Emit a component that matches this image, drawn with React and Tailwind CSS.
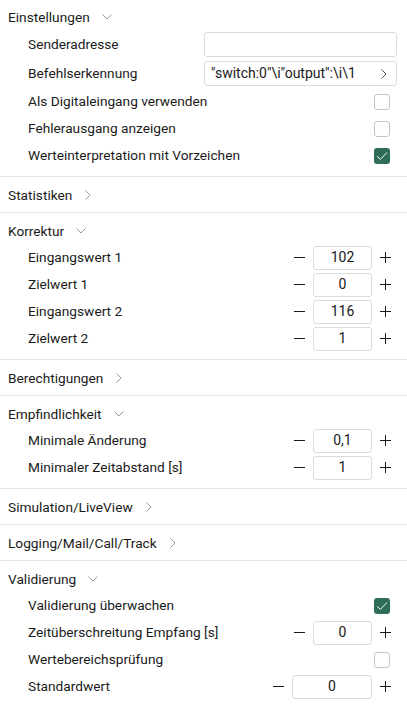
import React from "react";

const ChevronDown = () => (
  <svg width="10" height="6" viewBox="0 0 10 6" className="ml-[12px]" fill="none">
    <path d="M0.5 0.5 L5 5 L9.5 0.5" stroke="#9a9a9a" strokeWidth="1" />
  </svg>
);
const ChevronRight = ({ color = "#9a9a9a" }) => (
  <svg width="6" height="10" viewBox="0 0 6 10" fill="none">
    <path d="M0.5 0.5 L5 5 L0.5 9.5" stroke={color} strokeWidth="1" />
  </svg>
);

const Checkbox = ({ checked }) =>
  checked ? (
    <div className="mr-[7px] flex h-[16px] w-[16px] items-center justify-center rounded-[3px] bg-[#2f6e56]">
      <svg width="12" height="10" viewBox="0 0 12 10" fill="none">
        <path d="M1 5.2 L4.3 8.4 L11 1.5" stroke="#ffffff" strokeWidth="1" />
      </svg>
    </div>
  ) : (
    <div className="mr-[7px] h-[16px] w-[16px] rounded-[3px] border border-[#c6c6c6] bg-white" />
  );

const Stepper = ({ value, wide }) => (
  <div className="mr-[6px] flex items-center">
    <div className="h-[1px] w-[11px] bg-[#1a1a1a]" />
    <div
      className={
        (wide ? "w-[80px]" : "w-[59px]") +
        " ml-[8px] mr-[8px] flex h-[24px] items-center justify-center rounded-[3px] border border-[#dcdcdc] bg-white text-[14px] text-[#1a1a1a]"
      }
    >
      {value}
    </div>
    <div className="relative h-[11px] w-[11px]">
      <div className="absolute left-0 top-[5px] h-[1px] w-[11px] bg-[#1a1a1a]" />
      <div className="absolute left-[5px] top-0 h-[11px] w-[1px] bg-[#1a1a1a]" />
    </div>
  </div>
);

const Row = ({ label, children, h = "h-[27px]" }) => (
  <div className={h + " flex items-center justify-between pl-[28px] pr-[10px]"}>
    <span className="text-[13.7px] text-[#1a1a1a]">{label}</span>
    {children}
  </div>
);

const Section = ({ title, open, first, children }) => (
  <div className={(first ? "pt-[7px]" : "pt-[8px]") + " border-b border-[#e3e3e3] pb-[7px]"}>
    <div className="flex h-[20px] items-center pl-[8px]">
      <span className="text-[13.7px] text-[#1a1a1a]">{title}</span>
      {open ? <ChevronDown /> : <span className="ml-[13px] flex"><ChevronRight /></span>}
    </div>
    {open && <div className="mt-[3px]">{children}</div>}
  </div>
);

export default function App() {
  return (
    <div
      className="h-[717px] w-[407px] overflow-hidden bg-white"
      style={{ fontFamily: '"Segoe UI", Roboto, sans-serif' }}
    >
      <Section title="Einstellungen" open first>
        <Row label="Senderadresse" h="h-[29px]">
          <div className="h-[25px] w-[193px] rounded-[3px] border border-[#dcdcdc] bg-white" />
        </Row>
        <Row label="Befehlserkennung" h="h-[29px]">
          <div className="flex h-[25px] w-[193px] items-center justify-between rounded-[3px] border border-[#dcdcdc] bg-white pl-[6px] pr-[9px]">
            <span className="text-[14px] text-[#1a1a1a]">"switch:0"\i"output":\i\1</span>
            <ChevronRight color="#555555" />
          </div>
        </Row>
        <Row label="Als Digitaleingang verwenden">
          <Checkbox />
        </Row>
        <Row label="Fehlerausgang anzeigen">
          <Checkbox />
        </Row>
        <Row label="Werteinterpretation mit Vorzeichen">
          <Checkbox checked />
        </Row>
      </Section>
      <Section title="Statistiken" />
      <Section title="Korrektur" open>
        <Row label="Eingangswert 1">
          <Stepper value="102" />
        </Row>
        <Row label="Zielwert 1">
          <Stepper value="0" />
        </Row>
        <Row label="Eingangswert 2">
          <Stepper value="116" />
        </Row>
        <Row label="Zielwert 2">
          <Stepper value="1" />
        </Row>
      </Section>
      <Section title="Berechtigungen" />
      <Section title="Empfindlichkeit" open>
        <Row label="Minimale Änderung">
          <Stepper value="0,1" />
        </Row>
        <Row label="Minimaler Zeitabstand [s]">
          <Stepper value="1" />
        </Row>
      </Section>
      <Section title="Simulation/LiveView" />
      <Section title="Logging/Mail/Call/Track" />
      <div className="pt-[8px] pb-[7px]">
        <div className="flex h-[20px] items-center pl-[8px]">
          <span className="text-[13.7px] text-[#1a1a1a]">Validierung</span>
          <ChevronDown />
        </div>
        <div className="mt-[3px]">
          <Row label="Validierung überwachen">
            <Checkbox checked />
          </Row>
          <Row label="Zeitüberschreitung Empfang [s]">
            <Stepper value="0" />
          </Row>
          <Row label="Wertebereichsprüfung">
            <Checkbox />
          </Row>
          <Row label="Standardwert">
            <Stepper value="0" wide />
          </Row>
        </div>
      </div>
    </div>
  );
}
